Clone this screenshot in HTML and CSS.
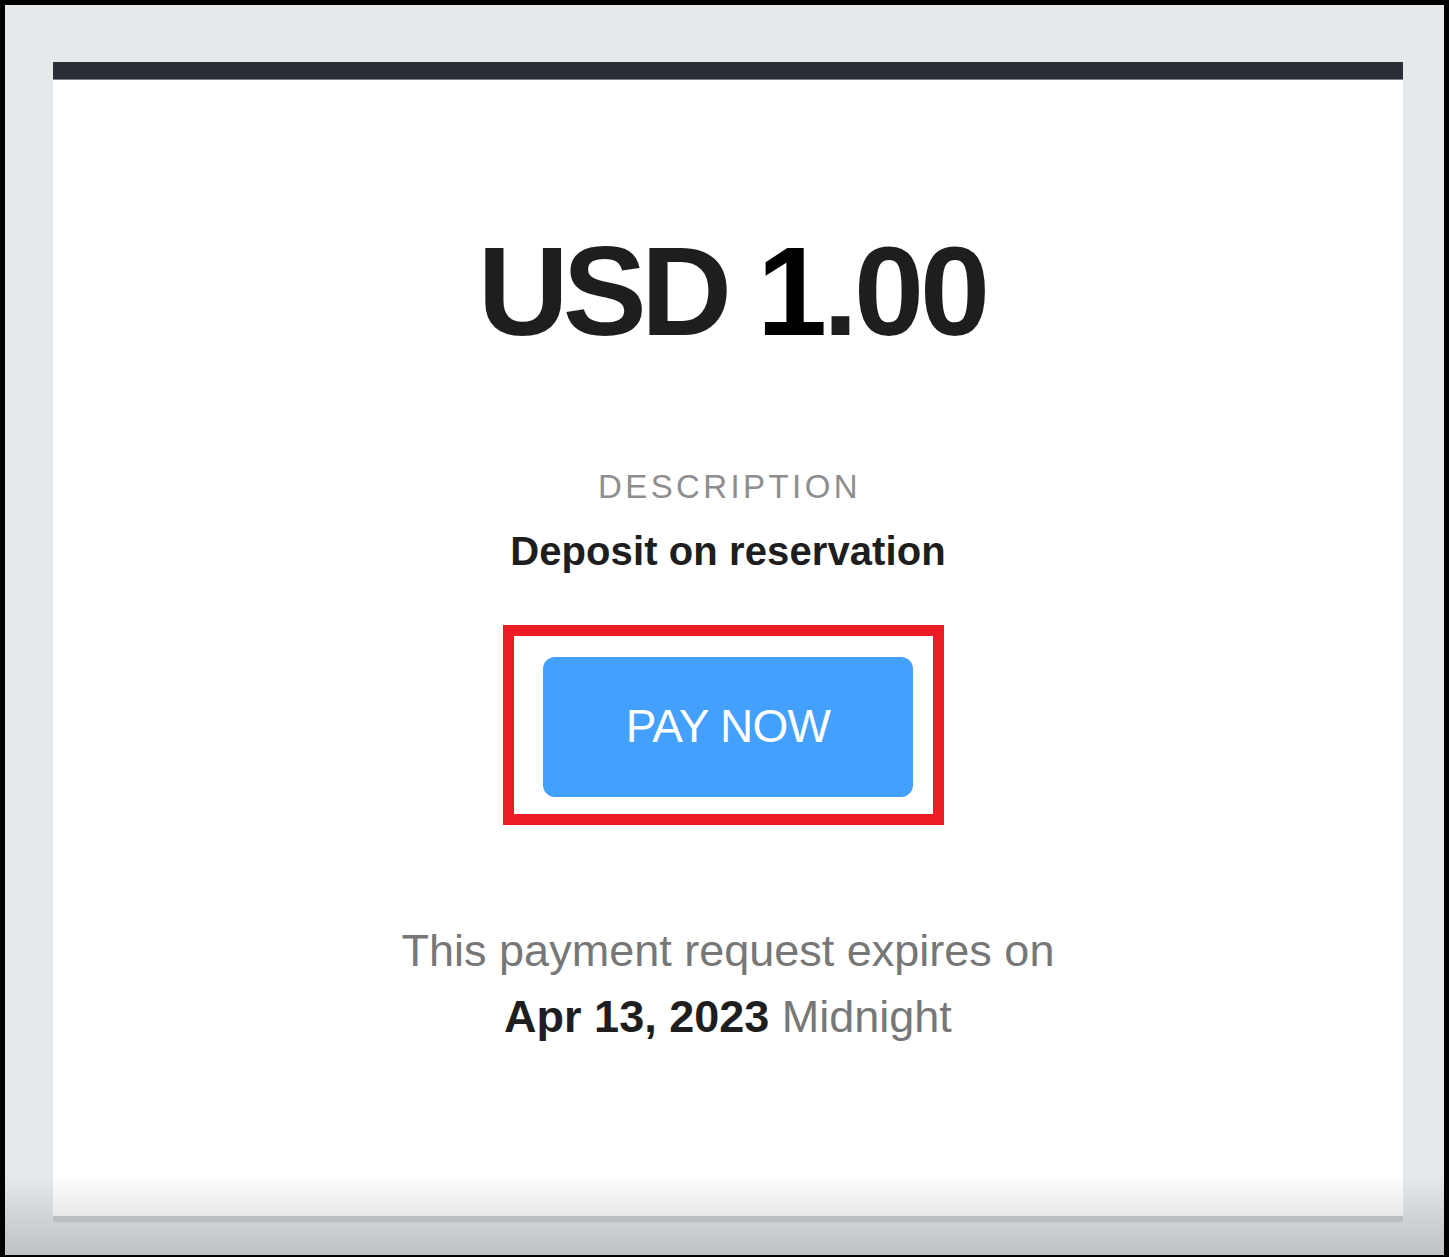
FILE: index.html
```html
<!DOCTYPE html>
<html lang="en">
<head>
<meta charset="utf-8">
<title>Payment request</title>
<link rel="stylesheet" href="styles.css">
</head>
<body>
<div class="frame">
  <div class="card">
    <div class="card-bar"></div>
    <div class="card-body">
      <div class="amount"><span class="cur">USD</span> <span class="one">1</span>.00</div>
      <div class="label">DESCRIPTION</div>
      <div class="desc">Deposit on reservation</div>
      <div class="btn-wrap">
        <a class="pay-btn" href="#">PAY NOW</a>
        <div class="highlight"></div>
      </div>
      <p class="expires">This payment request expires on<br><strong>Apr 13, 2023</strong> Midnight</p>
    </div>
  </div>
  <div class="fade"></div>
</div>
</body>
</html>
```
FILE: styles.css
```css
html, body {
  margin: 0;
  padding: 0;
  background: #000;
}
body {
  font-family: "Liberation Sans", Arial, Helvetica, sans-serif;
  width: 1449px;
  height: 1257px;
  overflow: hidden;
}
.frame {
  position: relative;
  margin: 5px 5px 0 5px;
  height: 1250px;
  background: #e6eaed;
  padding: 57px 41px 0 48px;
  box-sizing: border-box;
  overflow: hidden;
}
.card {
  width: 1350px;
  display: flex;
  flex-direction: column;
}
.card-bar {
  height: 17px;
  background: #2a2f37;
  border-bottom: 1px solid #80838a;
}
.card-body {
  background: #fff;
  height: 1142px;
  border-bottom: 6px solid #d0d4d8;
  display: flex;
  flex-direction: column;
  align-items: center;
  padding-top: 139px;
  box-sizing: border-box;
}
.amount {
  font-size: 126px;
  font-weight: 700;
  line-height: 145px;
  color: #1e1e1e;
  letter-spacing: -4px;
  padding-left: 8px;
}
.amount .cur {
  letter-spacing: -6px;
}
.amount .one {
  color: #000;
}
.label {
  margin-top: 104px;
  font-size: 33px;
  line-height: 38px;
  color: #8e8e8e;
  letter-spacing: 3.4px;
  margin-right: -3px;
}
.desc {
  margin-top: 22px;
  font-size: 40px;
  line-height: 46px;
  font-weight: 700;
  color: #1e1e1e;
  letter-spacing: 0.1px;
}
.btn-wrap {
  position: relative;
  margin-top: 83px;
}
.pay-btn {
  display: flex;
  align-items: center;
  justify-content: center;
  width: 370px;
  height: 140px;
  box-sizing: border-box;
  padding-bottom: 3px;
  background: #43a0fd;
  border-radius: 12px;
  color: #fff;
  font-size: 46px;
  letter-spacing: -0.7px;
  text-decoration: none;
}
.highlight {
  position: absolute;
  left: -40px;
  top: -32px;
  right: -31px;
  bottom: -28px;
  border: 11px solid #ec1c24;
  pointer-events: none;
}
.expires {
  margin: 121px 0 0;
  font-size: 45px;
  line-height: 66px;
  color: #777;
  text-align: center;
}
.expires strong {
  color: #1e1e1e;
  font-weight: 700;
}
.fade {
  position: absolute;
  left: 0;
  right: 0;
  bottom: 0;
  height: 82px;
  background: linear-gradient(to bottom, rgba(0,0,0,0) 0%, rgba(0,0,0,0.09) 50%, rgba(0,0,0,0.17) 100%);
  pointer-events: none;
}
```
